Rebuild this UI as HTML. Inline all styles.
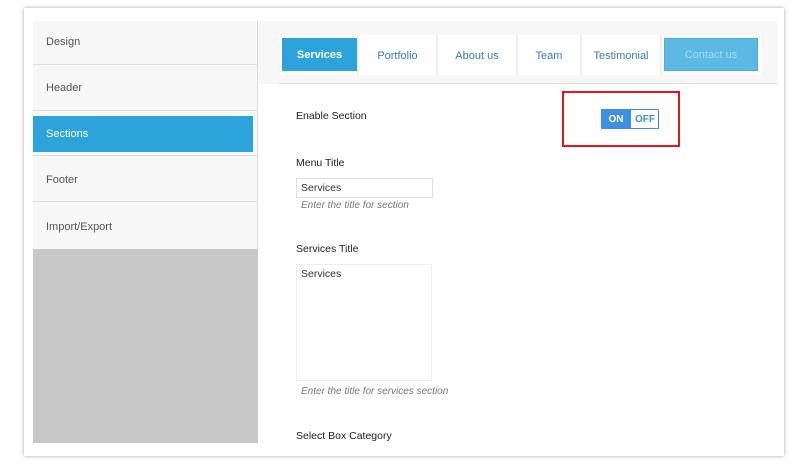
<!DOCTYPE html>
<html><head><style>
*{margin:0;padding:0;box-sizing:border-box}
body{width:800px;height:467px;background:#fff;font-family:"Liberation Sans",sans-serif;position:relative;overflow:hidden;font-size:11px;color:#333}
.card{position:absolute;left:24px;top:8px;width:760px;height:448px;background:#fff;box-shadow:0 0 4px rgba(0,0,0,.35)}
.a{position:absolute}
.side{left:33px;top:21px;width:225px;height:422px;background:#f7f7f7;border-right:1px solid #ddd}
.mi{position:absolute;left:0;width:225px;height:45px;border-bottom:1px solid #ddd;padding-left:13px;line-height:42px;color:#555;font-size:11px}
.gray{position:absolute;left:0;top:228px;width:225px;height:194px;background:#c8c8c8}
.tab{position:absolute;top:35px;height:40px;background:#fff;border-right:2px solid #eee;color:#3a7ab8;text-align:center;line-height:42px;font-size:11px}
.lbl{position:absolute;left:296px;font-size:10.5px;color:#222}
.hint{position:absolute;left:301px;font-style:italic;color:#777;font-size:10px}
</style></head><body>
<div class="card"></div>
<div class="a side">
 <div class="mi" style="top:0;height:44px">Design</div>
 <div class="mi" style="top:44px;height:46px;line-height:46px">Header</div>
 <div class="a" style="left:0;top:95px;width:220px;height:36px;background:#2ca3da;color:#fff;padding-left:13px;line-height:36px">Sections</div>
 <div class="a" style="left:0;top:134px;width:225px;height:1px;background:#ddd"></div>
 <div class="mi" style="top:136px;line-height:47px">Footer</div>
 <div class="mi" style="top:182px;border:none;height:46px;line-height:48px">Import/Export</div>
 <div class="gray"></div>
</div>
<div class="a" style="left:259px;top:21px;width:519px;height:63px;background:#f7f7f7"></div>
<div class="a" style="left:279px;top:83px;width:498px;height:1px;background:#ddd"></div>
<div class="a" style="left:279px;top:84px;width:498px;height:359px;background:#fff"></div>
<div class="tab" style="left:280px;width:79px"></div>
<div class="a" style="left:282px;top:38px;width:75px;height:33px;background:#2ca3da;color:#fff;font-weight:bold;text-align:center;line-height:35px;font-size:11px">Services</div>
<div class="tab" style="left:359px;width:79px">Portfolio</div>
<div class="tab" style="left:438px;width:80px">About us</div>
<div class="tab" style="left:518px;width:64px">Team</div>
<div class="tab" style="left:582px;width:80px">Testimonial</div>
<div class="tab" style="left:662px;width:100px;border:none"></div>
<div class="a" style="left:664px;top:38px;width:94px;height:33px;background:#5cb9e3;border:1px solid #4aaedc;color:#a9daf0;text-align:center;line-height:33px;font-size:11px">Contact us</div>
<div class="lbl" style="top:110px">Enable Section</div>
<div class="a" style="left:562px;top:91px;width:118px;height:56px;border:2px solid #e3141b"></div>
<div class="a" style="left:601px;top:109px;width:58px;height:20px;border:1px solid #3d8fe0;background:#fff"></div>
<div class="a" style="left:601px;top:109px;width:30px;height:20px;background:#3d8fe0;color:#fff;font-weight:bold;font-size:10px;text-align:center;line-height:22px">ON</div>
<div class="a" style="left:631px;top:109px;width:28px;height:20px;color:#3d8fe0;font-weight:bold;font-size:10px;text-align:center;line-height:22px">OFF</div>
<div class="lbl" style="top:157px">Menu Title</div>
<div class="a" style="left:296px;top:178px;width:137px;height:20px;border:1px solid #ddd;padding-left:4px;line-height:19px;font-size:10.5px">Services</div>
<div class="hint" style="top:200px">Enter the title for section</div>
<div class="lbl" style="top:243px">Services Title</div>
<div class="a" style="left:296px;top:264px;width:136px;height:117px;border:1px solid #eee;padding:3px 4px;font-size:10.5px">Services</div>
<div class="hint" style="top:386px">Enter the title for services section</div>
<div class="lbl" style="top:430px">Select Box Category</div>
</body></html>
